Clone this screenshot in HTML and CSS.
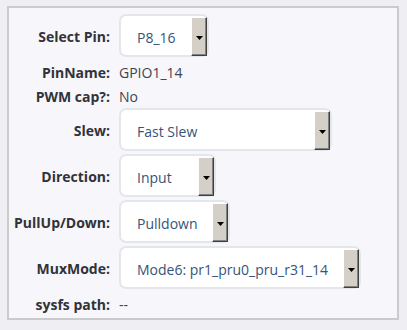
FILE: index.html
```html
<!DOCTYPE html>
<html lang="en">
<head>
    <meta charset="UTF-8">
    <title>Pin config</title>
    <link rel="stylesheet" href="styles.css">
</head>
<body>
    <div class="panel">
        <div class="form">
            <label class="lbl">Select Pin:</label>
            <div class="select w-pin"><span class="val">P8_16</span><span class="btn"><svg width="7" height="4" viewBox="0 0 7 4"><polygon points="0,0 7,0 3.5,4" fill="#000"/></svg></span></div>

            <label class="lbl text-row">PinName:</label>
            <div class="plain text-row">GPIO1_14</div>

            <label class="lbl text-row">PWM cap?:</label>
            <div class="plain text-row">No</div>

            <label class="lbl">Slew:</label>
            <div class="select w-slew"><span class="val">Fast Slew</span><span class="btn"><svg width="7" height="4" viewBox="0 0 7 4"><polygon points="0,0 7,0 3.5,4" fill="#000"/></svg></span></div>

            <label class="lbl">Direction:</label>
            <div class="select w-dir"><span class="val">Input</span><span class="btn"><svg width="7" height="4" viewBox="0 0 7 4"><polygon points="0,0 7,0 3.5,4" fill="#000"/></svg></span></div>

            <label class="lbl">PullUp/Down:</label>
            <div class="select w-pull"><span class="val">Pulldown</span><span class="btn"><svg width="7" height="4" viewBox="0 0 7 4"><polygon points="0,0 7,0 3.5,4" fill="#000"/></svg></span></div>

            <label class="lbl">MuxMode:</label>
            <div class="select w-mux"><span class="val">Mode6: pr1_pru0_pru_r31_14</span><span class="btn"><svg width="7" height="4" viewBox="0 0 7 4"><polygon points="0,0 7,0 3.5,4" fill="#000"/></svg></span></div>

            <label class="lbl text-row">sysfs path:</label>
            <div class="plain text-row">--</div>
        </div>
    </div>
</body>
</html>
```

FILE: styles.css
```css
*{
    padding: 0;
    margin: 0;
    box-sizing: border-box;
}
body{
    background-color: #efeef3;
    font-family: "Open Sans", "Noto Sans", sans-serif;
    font-size: 14px;
    padding: 6px 0 0 7px;
}
.panel{
    width: 392px;
    height: 314px;
    border: 2px solid #cbcbcb;
    background-color: #f7f6fb;
    padding: 6px 0 0 0;
}
.form{
    display: grid;
    grid-template-columns: 101px auto;
    column-gap: 9px;
    row-gap: 3px;
    align-items: center;
    justify-items: start;
}
.lbl{
    justify-self: end;
    font-weight: bold;
    color: #303338;
    padding-top: 2px;
    white-space: nowrap;
}
.text-row{
    height: 21px;
    line-height: 21px;
}
.plain{
    color: #3d4450;
    padding-top: 2px;
}
.select{
    height: 43px;
    display: flex;
    background-color: #fff;
    border: 2px solid #e3e7ea;
    border-radius: 7px;
}
.select .val{
    flex: 1;
    padding: 4px 0 0 16px;
    color: #355479;
    line-height: 35px;
    white-space: nowrap;
}
.select .btn{
    width: 16px;
    margin: 1px 0 0 0;
    height: 39px;
    background-color: #d4d0c8;
    border: 1px solid;
    border-color: #fff #404040 #404040 #fff;
    box-shadow: inset -1px -1px #808080;
    display: flex;
    align-items: center;
    justify-content: center;
    padding-top: 2px;
}
.w-pin{
    width: 90px;
}
.w-slew{
    width: 213px;
}
.w-dir{
    width: 97px;
}
.w-pull{
    width: 111px;
}
.w-mux{
    width: 242px;
}
```
